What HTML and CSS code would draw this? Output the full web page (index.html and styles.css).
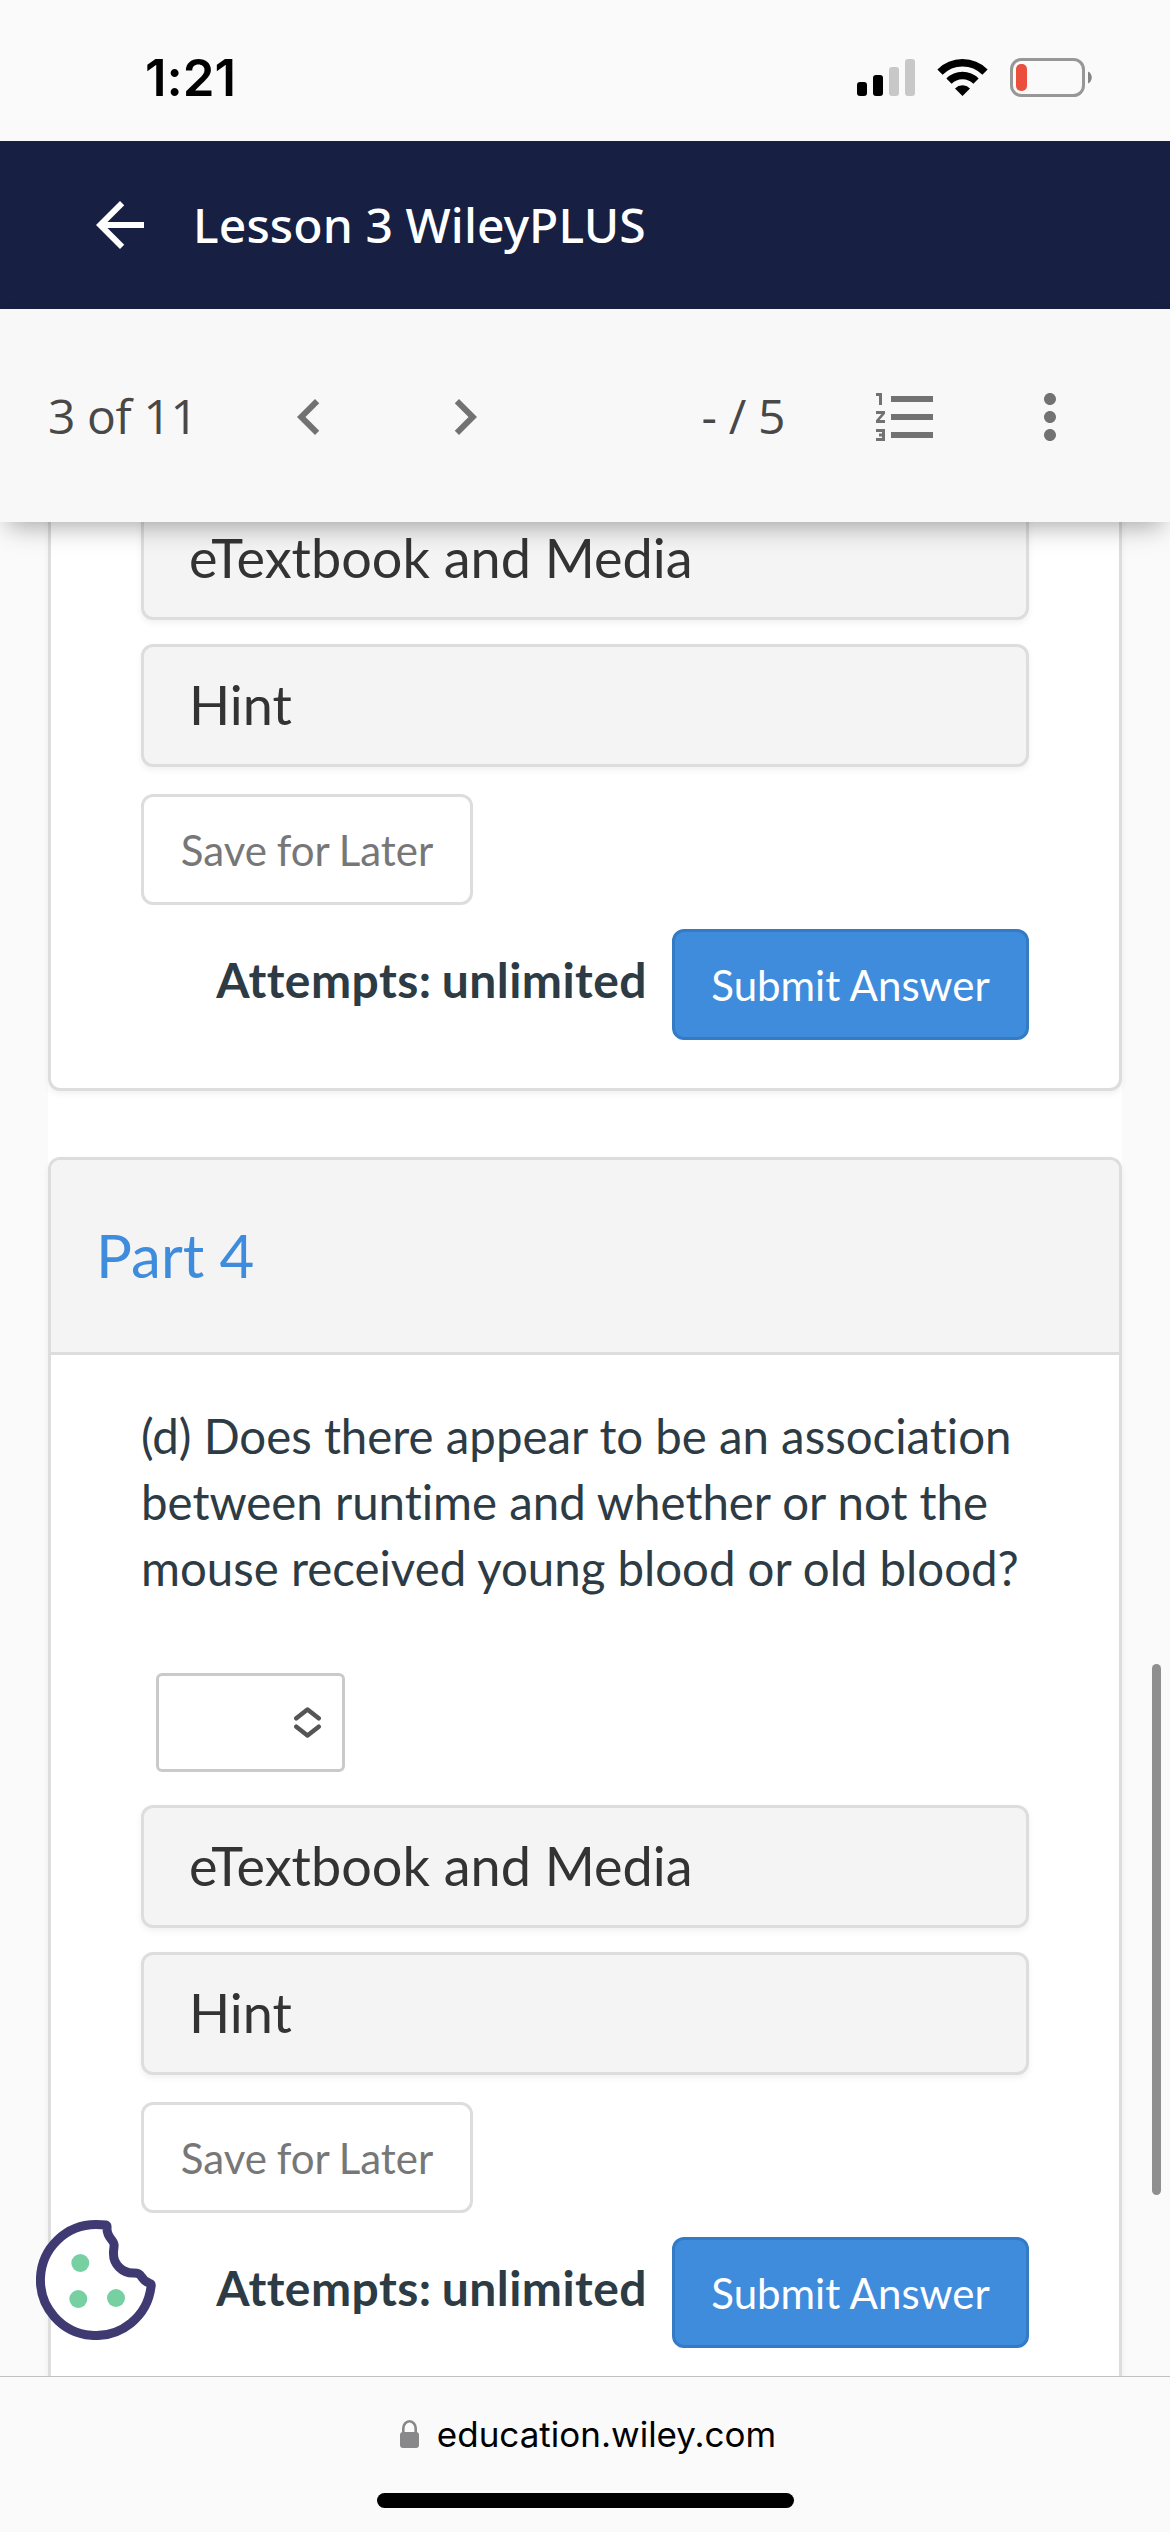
FILE: index.html
```html
<!DOCTYPE html>
<html lang="en">
<head>
  <meta charset="UTF-8" />
  <meta name="viewport" content="width=device-width, initial-scale=1.0"/>
  <title>Lesson 3 WileyPLUS</title>
  <link rel="stylesheet" href="styles.css">
</head>
<body>

<div class="status-bar">
  <span class="status-time">1:21</span>
  <div class="status-icons">
    <svg class="signal-icon" width="58" height="37" viewBox="0 0 58 37">
      <rect x="0" y="23" width="10" height="14" rx="3" />
      <rect x="16" y="16" width="10" height="21" rx="3" />
      <rect class="weak" x="32" y="8" width="10" height="29" rx="3" />
      <rect class="weak" x="48" y="0" width="10" height="37" rx="3" />
    </svg>
    <svg class="wifi-icon" width="51" height="37" viewBox="0 0 51 37">
      <path class="wave" d="M3 13.2A31.6 31.6 0 0 1 48 13.2" />
      <path class="wave" d="M12 22.2A19 19 0 0 1 39 22.2" />
      <path d="M25.5 37L18 29.4A10.8 10.8 0 0 1 33 29.4Z" />
    </svg>
    <svg class="battery-icon" width="82" height="39" viewBox="0 0 82 39">
      <rect class="shell" x="1.5" y="1.5" width="72" height="36" rx="10" />
      <rect class="level" x="6" y="6" width="11" height="27" rx="5" />
      <path class="nub" d="M78 13.5C83 15.5 83 23.5 78 25.5Z" />
    </svg>
  </div>
</div>

<header class="app-bar">
  <svg width="72" height="72" viewBox="0 0 24 24"><path d="M20 11H7.83l5.59-5.59L12 4l-8 8 8 8 1.41-1.41L7.83 13H20v-2z" /></svg>
  <h1 class="app-title">Lesson 3 WileyPLUS</h1>
</header>

<nav class="toolbar">
  <span class="question-count">3 of 11</span>
  <svg class="prev-icon" width="72" height="72" viewBox="0 0 24 24"><path d="M15.41 7.41L14 6l-6 6 6 6 1.41-1.41L10.83 12z" /></svg>
  <svg class="next-icon" width="72" height="72" viewBox="0 0 24 24"><path d="M10 6L8.59 7.41 13.17 12l-4.58 4.59L10 18l6-6z" /></svg>
  <span class="score">- / 5</span>
  <svg class="list-icon" width="72" height="72" viewBox="0 0 24 24"><path d="M2 17h2v.5H3v1h1v.5H2v1h3v-4H2v1zm1-9h1V4H2v1h1v3zm-1 3h1.8L2 13.1v.9h3v-1H3.2L5 10.9V10H2v1zm5-6v2h14V5H7zm0 14h14v-2H7v2zm0-6h14v-2H7v2z" /></svg>
  <svg class="more-icon" width="72" height="72" viewBox="0 0 24 24"><path d="M12 8c1.1 0 2-.9 2-2s-.9-2-2-2-2 .9-2 2 .9 2 2 2zm0 2c-1.1 0-2 .9-2 2s.9 2 2 2 2-.9 2-2-.9-2-2-2zm0 6c-1.1 0-2 .9-2 2s.9 2 2 2 2-.9 2-2-.9-2-2-2z" /></svg>
</nav>

<main class="viewport">
  <div class="page">
    <section class="part part-scrolled">
      <div class="part-body">
        <div class="accordion">eTextbook and Media</div>
        <div class="accordion">Hint</div>
        <button class="btn save-btn">Save for Later</button>
        <div class="submit-row">
          <span class="attempts">Attempts: unlimited</span>
          <button class="btn submit-btn">Submit Answer</button>
        </div>
      </div>
    </section>

    <section class="part">
      <h2 class="part-header">Part 4</h2>
      <div class="part-body">
        <p class="question">(d) Does there appear to be an association between runtime and whether or not the mouse received young blood or old blood?</p>
        <div class="answer-select">
          <svg width="27" height="31" viewBox="0 0 27 31"><path d="M2.3 11.3L13.5 2.5L24.7 11.3M2.3 19.7L13.5 28.5L24.7 19.7" /></svg>
        </div>
        <div class="accordion">eTextbook and Media</div>
        <div class="accordion">Hint</div>
        <button class="btn save-btn">Save for Later</button>
        <div class="submit-row">
          <span class="attempts">Attempts: unlimited</span>
          <button class="btn submit-btn">Submit Answer</button>
        </div>
      </div>
    </section>
  </div>

  <div class="scroll-thumb"></div>
  <svg class="cookie" width="120" height="120" viewBox="0 0 120 120">
    <path d="M70 5C66.7 4.6 63.3 4.5 60 4.5A55.5 55.5 0 1 0 115 67C115.6 64.5 115 63.5 113 63C109 61.5 106.5 58.5 105 56C103.5 53.5 101 52.8 97 53C86 53 77.5 44 77.5 34C77.2 30 78.5 27 78 24C77.5 20.5 71 17 71 9C71 6 71.5 5.5 70 5Z" />
    <circle cx="44.3" cy="43" r="9" />
    <circle cx="42.3" cy="79" r="9" />
    <circle cx="80" cy="78" r="9" />
  </svg>
</main>

<footer class="browser-bar">
  <div class="address">
    <svg width="19" height="28" viewBox="0 0 19 28">
      <rect x="0" y="12" width="19" height="16" rx="3" />
      <path d="M3.3 13V8.5A6.2 7.2 0 0 1 15.7 8.5V13" />
    </svg>
    <span>education.wiley.com</span>
  </div>
  <div class="home-indicator"></div>
</footer>

</body>
</html>
```
FILE: styles.css
```css
* {
  box-sizing: border-box;
}

body {
  margin: 0;
  width: 1170px;
  height: 2532px;
  display: flex;
  flex-direction: column;
  overflow: hidden;
  background-color: #fafafa;
  font-family: Lato, sans-serif;
  font-variant-ligatures: none;
  color: #2d3b45;
}

svg {
  display: block;
  flex: none;
}

/* phone status bar */
.status-bar {
  height: 141px;
  flex: none;
  display: flex;
  align-items: center;
  justify-content: space-between;
  padding: 14px 78px 0 145px;
  color: #000;
}

.status-time {
  font-family: Inter, sans-serif;
  font-size: 51px;
  font-weight: 600;
  line-height: 60px;
}

.status-icons {
  display: flex;
  align-items: center;
  gap: 22px;
}

.signal-icon .weak {
  fill: #c8c8c8;
}

.wifi-icon .wave {
  fill: none;
  stroke: #000;
  stroke-width: 7.4px;
}

.battery-icon .shell {
  fill: none;
  stroke: #979797;
  stroke-width: 3px;
}

.battery-icon .level {
  fill: #eb4e3d;
}

.battery-icon .nub {
  fill: #858585;
}

/* header */
.app-bar {
  height: 168px;
  flex: none;
  display: flex;
  align-items: center;
  gap: 37px;
  padding-left: 84px;
  background-color: #171f42;
  color: #fff;
}

.app-bar svg {
  fill: #fff;
}

.app-title {
  margin: 0;
  padding-bottom: 1px;
  font-family: "Noto Sans", sans-serif;
  font-size: 48px;
  font-weight: 500;
  letter-spacing: 0.1px;
  line-height: 72px;
}

.toolbar {
  position: relative;
  z-index: 2;
  height: 213px;
  flex: none;
  display: flex;
  align-items: center;
  padding: 3px 84px 0 48px;
  background-color: #f8f8f8;
  box-shadow: 0 12px 24px -8px rgba(0, 0, 0, 0.35);
  font-family: "Open Sans", sans-serif;
  font-size: 48px;
  letter-spacing: -0.4px;
  line-height: 72px;
  color: #484848;
}

.toolbar svg {
  fill: #727272;
}

.question-count,
.score {
  padding-bottom: 2px;
}

.question-count {
  width: 225px;
}

.next-icon {
  margin-left: 84px;
}

.score {
  margin-left: auto;
}

.list-icon {
  margin-left: 85px;
}

.more-icon {
  margin-left: 72px;
}

/* scrolling area */
.viewport {
  position: relative;
  flex: 1;
  min-height: 0;
  overflow: hidden;
}

.page {
  margin: 0 48px;
  background-color: #fff;
}

.part {
  margin-bottom: 66px;
  border: 3px solid #ddd;
  border-radius: 12px;
  background-color: #fff;
  box-shadow: 0 3px 6px rgba(0, 0, 0, 0.06);
}

.part-scrolled {
  margin-top: -75px;
}

.part-scrolled .part-body {
  padding-top: 47px;
}

.part-header {
  height: 195px;
  margin: 0;
  padding: 0 45px;
  border-bottom: 3px solid #ddd;
  border-radius: 9px 9px 0 0;
  background-color: #f4f4f4;
  color: #3f8cdc;
  font-size: 60px;
  font-weight: 400;
  line-height: 190px;
}

.part-body {
  padding: 48px 90px;
}

.question {
  margin: 0 -10px 72px 0;
  font-size: 47.4px;
  line-height: 66px;
}

.answer-select {
  width: 189px;
  height: 99px;
  margin: 0 0 33px 15px;
  display: flex;
  align-items: center;
  justify-content: flex-end;
  padding-right: 21px;
  border: 3px solid #cacaca;
  border-radius: 6px;
}

.answer-select svg path {
  fill: none;
  stroke: #555;
  stroke-width: 4.5px;
  stroke-linecap: round;
  stroke-linejoin: round;
}

.accordion {
  height: 123px;
  margin-bottom: 24px;
  padding-left: 45px;
  border: 3px solid #ddd;
  border-radius: 12px;
  background-color: #f4f4f4;
  box-shadow: 0 3px 6px rgba(0, 0, 0, 0.06);
  color: #333;
  font-size: 54px;
  line-height: 116px;
}

.btn {
  display: block;
  height: 111px;
  padding: 2px 0 0;
  border: 3px solid #ddd;
  border-radius: 12px;
  font-family: Lato, sans-serif;
  font-size: 42px;
  font-variant-ligatures: none;
  line-height: 103px;
  white-space: nowrap;
}

.save-btn {
  width: 332px;
  margin-top: 27px;
  background-color: #fff;
  color: #777;
  word-spacing: -1px;
}

.submit-row {
  display: flex;
  justify-content: flex-end;
  gap: 25px;
  margin-top: 24px;
}

.submit-btn {
  width: 357px;
  border-color: #337bc4;
  background-color: #3f8cdc;
  color: #fff;
}

.attempts {
  font-size: 48px;
  font-weight: 700;
  letter-spacing: 0.45px;
  line-height: 102px;
  word-spacing: -2px;
}

.scroll-thumb {
  position: absolute;
  top: 1142px;
  right: 9px;
  width: 9px;
  height: 531px;
  border-radius: 5px;
  background-color: #8f8f8f;
}

.cookie {
  position: absolute;
  left: 36px;
  bottom: 36px;
}

.cookie path {
  fill: #fff;
  stroke: #3f3a72;
  stroke-width: 9px;
  stroke-linejoin: round;
}

.cookie circle {
  fill: #76d0a1;
}

/* browser bar */
.browser-bar {
  height: 156px;
  flex: none;
  display: flex;
  flex-direction: column;
  align-items: center;
  justify-content: space-between;
  padding: 33px 0 24px;
  border-top: 1px solid #c0c0c0;
  background-color: #fafafa;
}

.address {
  display: flex;
  align-items: center;
  gap: 18px;
  margin-left: 6px;
  font-family: Inter, sans-serif;
  font-size: 35px;
  line-height: 48px;
  color: #000;
}

.address svg {
  fill: #88888b;
}

.address svg path {
  fill: none;
  stroke: #88888b;
  stroke-width: 2.6px;
}

.home-indicator {
  width: 417px;
  height: 15px;
  border-radius: 8px;
  background-color: #000;
}
```
